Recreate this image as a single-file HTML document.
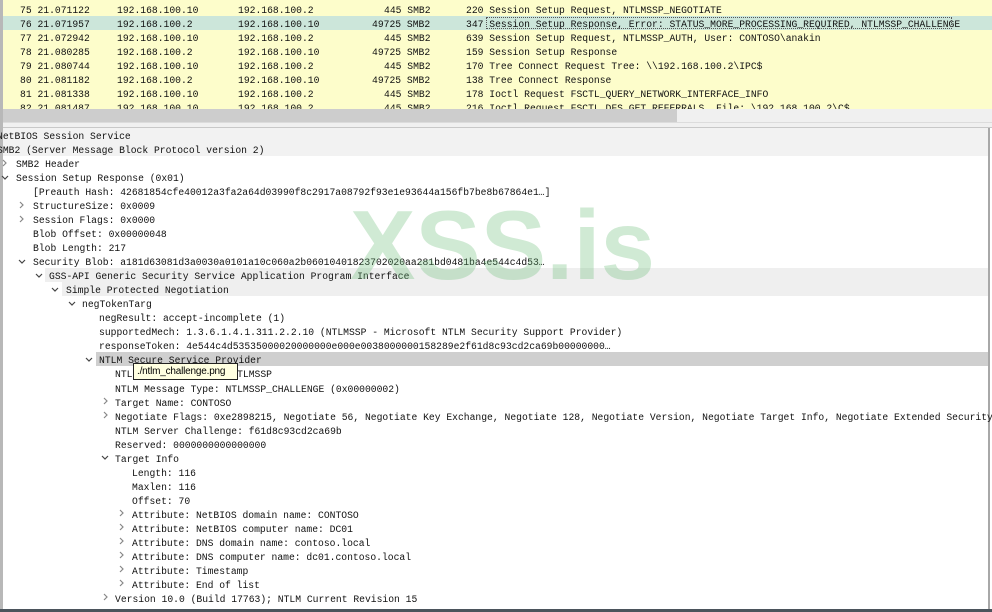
<!DOCTYPE html>
<html><head><meta charset="utf-8"><style>
*{margin:0;padding:0;box-sizing:border-box}
body{width:992px;height:612px;overflow:hidden;background:#fff;position:relative;font-family:"Liberation Mono",monospace;font-size:9.7px;color:#111}
.pl{position:absolute;left:0;top:0;width:992px;height:109px;background:#fdfdcb;overflow:hidden}
.r{position:absolute;left:0;width:992px;height:14px;line-height:14px;white-space:pre}
.r span{position:absolute;top:1.5px}
.sel{background:#cce6da}
.d{position:absolute;height:14px;line-height:14px;white-space:pre;padding-top:1.5px}
.bg{position:absolute;height:14px}
.wm{position:absolute;left:350px;top:195px;font-family:"Liberation Sans",sans-serif;font-weight:bold;font-size:98px;color:rgba(110,190,120,0.32);line-height:100px}
</style></head><body>
<div class="pl">
<div class="r" style="top:2px"><span style="left:20px">75 21.071122</span><span style="left:117px">192.168.100.10</span><span style="left:238px">192.168.100.2</span><span style="left:384px">445 SMB2</span><span style="left:466px">220 Session Setup Request, NTLMSSP_NEGOTIATE</span></div>
<div class="r sel" style="top:16px"><span style="left:20px">76 21.071957</span><span style="left:117px">192.168.100.2</span><span style="left:238px">192.168.100.10</span><span style="left:372px">49725 SMB2</span><span style="left:466px">347 Session Setup Response, Error: STATUS_MORE_PROCESSING_REQUIRED, NTLMSSP_CHALLENGE</span><span style="left:486px;top:1px;width:466px;height:12px;border:1px dotted #555"></span></div>
<div class="r" style="top:30px"><span style="left:20px">77 21.072942</span><span style="left:117px">192.168.100.10</span><span style="left:238px">192.168.100.2</span><span style="left:384px">445 SMB2</span><span style="left:466px">639 Session Setup Request, NTLMSSP_AUTH, User: CONTOSO\anakin</span></div>
<div class="r" style="top:44px"><span style="left:20px">78 21.080285</span><span style="left:117px">192.168.100.2</span><span style="left:238px">192.168.100.10</span><span style="left:372px">49725 SMB2</span><span style="left:466px">159 Session Setup Response</span></div>
<div class="r" style="top:58px"><span style="left:20px">79 21.080744</span><span style="left:117px">192.168.100.10</span><span style="left:238px">192.168.100.2</span><span style="left:384px">445 SMB2</span><span style="left:466px">170 Tree Connect Request Tree: \\192.168.100.2\IPC$</span></div>
<div class="r" style="top:72px"><span style="left:20px">80 21.081182</span><span style="left:117px">192.168.100.2</span><span style="left:238px">192.168.100.10</span><span style="left:372px">49725 SMB2</span><span style="left:466px">138 Tree Connect Response</span></div>
<div class="r" style="top:86px"><span style="left:20px">81 21.081338</span><span style="left:117px">192.168.100.10</span><span style="left:238px">192.168.100.2</span><span style="left:384px">445 SMB2</span><span style="left:466px">178 Ioctl Request FSCTL_QUERY_NETWORK_INTERFACE_INFO</span></div>
<div class="r" style="top:100px"><span style="left:20px">82 21.081487</span><span style="left:117px">192.168.100.10</span><span style="left:238px">192.168.100.2</span><span style="left:384px">445 SMB2</span><span style="left:466px">216 Ioctl Request FSCTL_DFS_GET_REFERRALS, File: \192.168.100.2\C$</span></div>
</div>
<div style="position:absolute;left:0;top:0;width:3px;height:609px;background:#b8b8b8"></div>
<div style="position:absolute;left:3px;top:109px;width:989px;height:13px;background:#f0f0f0"></div>
<div style="position:absolute;left:3px;top:109px;width:674px;height:13px;background:#cdcdcd"></div>
<div style="position:absolute;left:3px;top:122px;width:989px;height:6px;background:#f0f0f0;border-top:1px solid #dcdcdc;border-bottom:1px solid #c8c8c8"></div>
<div style="position:absolute;left:988px;top:128px;width:4px;height:481px;background:#fff;border-left:2px solid #a8a8a8"></div>

<div class="bg" style="left:3px;top:128px;width:985px;background:#f2f2f2"></div>
<div class="bg" style="left:3px;top:142px;width:985px;background:#f2f2f2"></div>
<div class="bg" style="left:45px;top:268px;width:943px;background:#efefef"></div>
<div class="bg" style="left:62px;top:282px;width:926px;background:#efefef"></div>
<div class="bg" style="left:96px;top:352px;width:892px;background:#cfcfcf"></div>

<div class="d" style="left:-3px;top:128px">NetBIOS Session Service</div>
<div class="d" style="left:-3px;top:142px">SMB2 (Server Message Block Protocol version 2)</div>
<div class="d" style="left:16px;top:156px">SMB2 Header</div>
<div class="d" style="left:16px;top:170px">Session Setup Response (0x01)</div>
<div class="d" style="left:33px;top:184px">[Preauth Hash: 42681854cfe40012a3fa2a64d03990f8c2917a08792f93e1e93644a156fb7be8b67864e1…]</div>
<div class="d" style="left:33px;top:198px">StructureSize: 0x0009</div>
<div class="d" style="left:33px;top:212px">Session Flags: 0x0000</div>
<div class="d" style="left:33px;top:226px">Blob Offset: 0x00000048</div>
<div class="d" style="left:33px;top:240px">Blob Length: 217</div>
<div class="d" style="left:33px;top:254px">Security Blob: a181d63081d3a0030a0101a10c060a2b06010401823702020aa281bd0481ba4e544c4d53…</div>
<div class="d" style="left:49px;top:268px">GSS-API Generic Security Service Application Program Interface</div>
<div class="d" style="left:66px;top:282px">Simple Protected Negotiation</div>
<div class="d" style="left:82px;top:296px">negTokenTarg</div>
<div class="d" style="left:99px;top:310px">negResult: accept-incomplete (1)</div>
<div class="d" style="left:99px;top:324px">supportedMech: 1.3.6.1.4.1.311.2.2.10 (NTLMSSP - Microsoft NTLM Security Support Provider)</div>
<div class="d" style="left:99px;top:338px">responseToken: 4e544c4d53535000020000000e000e0038000000158289e2f61d8c93cd2ca69b00000000…</div>
<div class="d" style="left:99px;top:352px">NTLM Secure Service Provider</div>
<div class="d" style="left:115px;top:366px">NTLMSSP identifier: NTLMSSP</div>
<div class="d" style="left:115px;top:381px">NTLM Message Type: NTLMSSP_CHALLENGE (0x00000002)</div>
<div class="d" style="left:115px;top:395px">Target Name: CONTOSO</div>
<div class="d" style="left:115px;top:409px">Negotiate Flags: 0xe2898215, Negotiate 56, Negotiate Key Exchange, Negotiate 128, Negotiate Version, Negotiate Target Info, Negotiate Extended Security,</div>
<div class="d" style="left:115px;top:423px">NTLM Server Challenge: f61d8c93cd2ca69b</div>
<div class="d" style="left:115px;top:437px">Reserved: 0000000000000000</div>
<div class="d" style="left:115px;top:451px">Target Info</div>
<div class="d" style="left:132px;top:465px">Length: 116</div>
<div class="d" style="left:132px;top:479px">Maxlen: 116</div>
<div class="d" style="left:132px;top:493px">Offset: 70</div>
<div class="d" style="left:132px;top:507px">Attribute: NetBIOS domain name: CONTOSO</div>
<div class="d" style="left:132px;top:521px">Attribute: NetBIOS computer name: DC01</div>
<div class="d" style="left:132px;top:535px">Attribute: DNS domain name: contoso.local</div>
<div class="d" style="left:132px;top:549px">Attribute: DNS computer name: dc01.contoso.local</div>
<div class="d" style="left:132px;top:563px">Attribute: Timestamp</div>
<div class="d" style="left:132px;top:577px">Attribute: End of list</div>
<div class="d" style="left:115px;top:591px">Version 10.0 (Build 17763); NTLM Current Revision 15</div>

<svg style="position:absolute;left:0;top:129px" width="140" height="480">
<g fill="none" stroke="#888" stroke-width="1.2">
<path d="M3 31 l3 3 -3 3"/><path d="M20 73 l3 3 -3 3"/><path d="M20 87 l3 3 -3 3"/>
<path d="M104 269 l3 3 -3 3"/><path d="M104 283 l3 3 -3 3"/>
<path d="M120 381 l3 3 -3 3"/><path d="M120 395 l3 3 -3 3"/><path d="M120 409 l3 3 -3 3"/><path d="M120 423 l3 3 -3 3"/><path d="M120 437 l3 3 -3 3"/><path d="M120 451 l3 3 -3 3"/>
<path d="M104 465 l3 3 -3 3"/>
</g>
<g fill="none" stroke="#444" stroke-width="1.2">
<path d="M2 47 l3 3 3 -3"/><path d="M19 131 l3 3 3 -3"/><path d="M36 145 l3 3 3 -3"/><path d="M52 159 l3 3 3 -3"/><path d="M69 173 l3 3 3 -3"/><path d="M86 229 l3 3 3 -3"/><path d="M102 327 l3 3 3 -3"/>
</g>
</svg>

<div class="wm">XSS.is</div>

<div style="position:absolute;left:133px;top:363px;width:105px;height:17px;background:#ffffe1;border:1px solid #222;font-family:'Liberation Sans',sans-serif;font-size:10px;letter-spacing:-0.2px;line-height:15px;padding-left:3px;color:#000;white-space:nowrap;overflow:hidden">./ntlm_challenge.png</div>
<div style="position:absolute;left:0;top:609px;width:992px;height:3px;background:#4b545c"></div>
</body></html>
